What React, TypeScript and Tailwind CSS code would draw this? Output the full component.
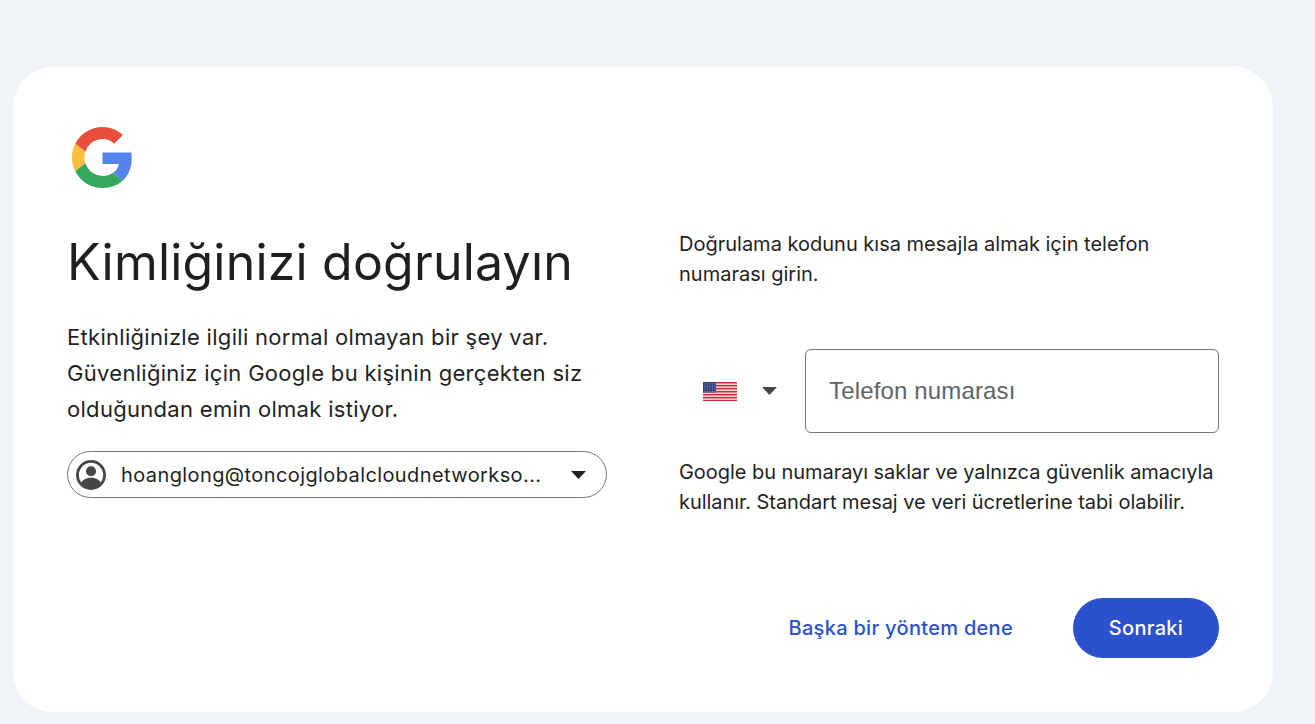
import React from 'react';

const GoogleLogo = () => (
  <svg viewBox="0 0 48 48" className="w-[61px] h-[61px] ml-[5px] block">
    <path fill="#EA4F3D" d="M24 9.5c3.54 0 6.71 1.22 9.21 3.6l6.85-6.85C35.9 2.38 30.47 0 24 0 14.62 0 6.51 5.38 2.56 13.22l7.98 6.19C12.43 13.72 17.74 9.5 24 9.5z" />
    <path fill="#5383EC" d="M46.98 24.55c0-1.57-.15-3.09-.38-4.55H24v9.02h12.94c-.58 2.96-2.26 5.48-4.78 7.18l7.73 6c4.51-4.18 7.09-10.36 7.09-17.65z" />
    <path fill="#FBBF3F" d="M10.53 28.59c-.48-1.45-.76-2.99-.76-4.59s.27-3.14.76-4.59l-7.98-6.19C.92 16.46 0 20.12 0 24c0 3.88.92 7.54 2.56 10.78l7.97-6.19z" />
    <path fill="#34A85C" d="M24 48c6.48 0 11.93-2.13 15.89-5.81l-7.73-6c-2.15 1.45-4.92 2.3-8.16 2.3-6.26 0-11.57-4.22-13.47-9.91l-7.98 6.19C6.51 42.62 14.62 48 24 48z" />
  </svg>
);

const UsFlag = () => (
  <svg viewBox="0 0 34 19" className="w-[34px] h-[19px] block">
    <rect width="34" height="19" fill="#f6c9cb" />
    {[0, 3, 6, 9, 12, 15, 18].map((y) => (
      <rect key={y} x="0" y={y} width="34" height="1.4" fill="#c8303f" />
    ))}
    <rect width="13" height="10.5" fill="#34427f" />
    {[1.5, 4, 6.5, 9].map((y) =>
      [1.5, 4, 6.5, 9, 11.5].map((x) => (
        <rect key={`${x}-${y}`} x={x} y={y} width="0.9" height="0.9" fill="#a9b2d6" />
      )),
    )}
  </svg>
);

const Caret = ({ color }: { color: string }) => (
  <svg viewBox="0 0 15 8" className="w-[15px] h-[8px] block" fill={color}>
    <path d="M0 0h15L7.5 8z" />
  </svg>
);

const AccountIcon = () => (
  <svg viewBox="0 0 32 32" className="w-[30px] h-[30px] block shrink-0">
    <circle cx="16" cy="16" r="14.5" fill="none" stroke="#444746" strokeWidth="3" />
    <circle cx="16" cy="12" r="5.4" fill="#444746" />
    <path d="M5.5 24.5c2-4 6-5.5 10.5-5.5s8.5 1.5 10.5 5.5C24 28 20 30 16 30s-8-2-10.5-5.5z" fill="#444746" />
  </svg>
);

export default function App() {
  return (
    <div className="bg-[#f0f4f9] w-[1315px] h-[724px] overflow-hidden pt-[67px] pl-[13px] font-['Inter','Roboto',sans-serif]">
      <div className="bg-white w-[1260px] h-[645px] rounded-[40px] px-[54px] pt-[60px]">
        {/* Logo */}
        <GoogleLogo />

        <div className="grid grid-cols-[540px_540px] gap-x-[72px] mt-[41px]">
          {/* Left */}
          <div>
            <h1 className="text-[50px] leading-[64px] font-normal text-[#1f1f1f] mt-[1px] tracking-[0.2px]">
              Kimliğinizi doğrulayın
            </h1>
            <p className="text-[22px] leading-[36px] text-[#1f1f1f] mt-[25px] tracking-[0.3px]">
              Etkinliğinizle ilgili normal olmayan bir şey var.
              <br />
              Güvenliğiniz için Google bu kişinin gerçekten siz
              <br />
              olduğundan emin olmak istiyor.
            </p>
            <div className="mt-[24px] h-[47px] rounded-full border border-[#747775] flex items-center pl-[8px] pr-[20px]">
              <AccountIcon />
              <span className="ml-[15px] flex-1 text-[20px] font-normal tracking-[0.4px] text-[#1f1f1f] truncate">
                hoanglong@toncojglobalcloudnetworkso...
              </span>
              <Caret color="#1f1f1f" />
            </div>
          </div>

          {/* Right */}
          <div className="flex flex-col">
            <p className="text-[20px] leading-[30px] text-[#1f1f1f]">
              Doğrulama kodunu kısa mesajla almak için telefon
              <br />
              numarası girin.
            </p>
            <div className="flex items-center mt-[60px]">
              <div className="w-[126px] flex items-center pl-[24px]">
                <UsFlag />
                <span className="ml-[25px]">
                  <Caret color="#444746" />
                </span>
              </div>
              <div className="flex-1 h-[84px] rounded-[6px] border border-[#747775] flex items-center pl-[23px] text-[24px] tracking-[0.15px] text-[#5f6368] font-['Liberation_Sans',sans-serif]">
                Telefon numarası
              </div>
            </div>
            <p className="text-[20px] leading-[30px] text-[#1f1f1f] mt-[24px] tracking-[-0.05px]">
              Google bu numarayı saklar ve yalnızca güvenlik amacıyla
              <br />
              kullanır. Standart mesaj ve veri ücretlerine tabi olabilir.
            </p>
            <div className="flex items-center justify-end mt-[81px]">
              <span className="text-[20px] font-medium tracking-[0.3px] text-[#2b51cc] mr-[60px]">Başka bir yöntem dene</span>
              <button className="w-[146px] h-[60px] rounded-full bg-[#2b51cc] text-white text-[20px] font-medium tracking-[0.3px]">
                Sonraki
              </button>
            </div>
          </div>
        </div>
      </div>
    </div>
  );
}
